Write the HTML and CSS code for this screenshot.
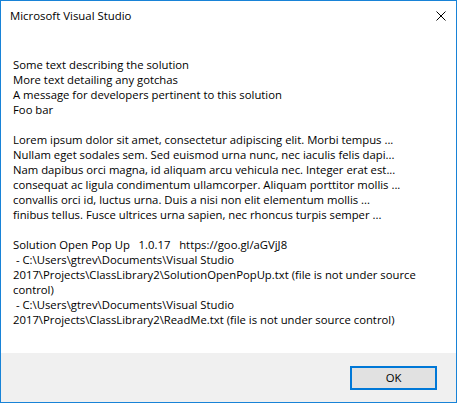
FILE: index.html
```html
<!DOCTYPE html>
<html>
<head>
<meta charset="utf-8">
<title>Microsoft Visual Studio</title>
<link rel="stylesheet" href="styles.css">
</head>
<body>
<div class="window">
  <div class="titlebar">
    <span class="title">Microsoft Visual Studio</span>
    <span class="close" aria-label="Close">
      <svg width="10" height="10" viewBox="0 0 10 10"><path d="M0.5 0.5 L9.5 9.5 M9.5 0.5 L0.5 9.5" stroke="#000" stroke-width="1" fill="none"/></svg>
    </span>
  </div>
  <div class="content">
    <div class="message">Some text describing the solution
More text detailing any gotchas
A message for developers pertinent to this solution
Foo bar

Lorem ipsum dolor sit amet, consectetur adipiscing elit. Morbi tempus ...
Nullam eget sodales sem. Sed euismod urna nunc, nec iaculis felis dapi...
Nam dapibus orci magna, id aliquam arcu vehicula nec. Integer erat est...
consequat ac ligula condimentum ullamcorper. Aliquam porttitor mollis ...
convallis orci id, luctus urna. Duis a nisi non elit elementum mollis ...
finibus tellus. Fusce ultrices urna sapien, nec rhoncus turpis semper ...

Solution Open Pop Up   1.0.17   https://goo.gl/aGVjJ8
 - C:\Users\gtrev\Documents\Visual Studio
2017\Projects\ClassLibrary2\SolutionOpenPopUp.txt (file is not under source
control)
 - C:\Users\gtrev\Documents\Visual Studio
2017\Projects\ClassLibrary2\ReadMe.txt (file is not under source control)</div>
  </div>
  <div class="footer">
    <button class="btn">OK</button>
  </div>
</div>
</body>
</html>
```
FILE: styles.css
```css
html, body {
  margin: 0;
  padding: 0;
  background: #ffffff;
}
.window {
  width: 457px;
  height: 403px;
  box-sizing: border-box;
  border: 1px solid #1883d7;
  display: flex;
  flex-direction: column;
  background: #ffffff;
  font-family: "Open Sans", "Noto Sans", sans-serif;
  font-size: 11.3px;
  color: #000000;
}
.titlebar {
  height: 29px;
  flex: none;
  display: flex;
  align-items: center;
  justify-content: space-between;
  padding: 0 10px 0 9px;
}
.title {
  font-size: 11.4px;
  line-height: 15px;
}
.close {
  display: flex;
  width: 10px;
  height: 10px;
  margin-top: 0px;
}
.content {
  flex: 1;
  padding: 27px 12px 0 12px;
}
.message {
  white-space: pre;
  line-height: 15px;
}
.footer {
  flex: none;
  height: 49px;
  box-sizing: border-box;
  background: #f0f0f0;
  display: flex;
  justify-content: flex-end;
  align-items: flex-start;
  padding: 13px 19px 0 0;
}
.btn {
  width: 87px;
  height: 24px;
  box-sizing: border-box;
  border: 2px solid #0078d7;
  background: #e1e1e1;
  font-family: "Open Sans", "Noto Sans", sans-serif;
  font-size: 11.3px;
  color: #000000;
  padding: 0;
  margin: 0;
  border-radius: 0;
  line-height: 18px;
}
```
